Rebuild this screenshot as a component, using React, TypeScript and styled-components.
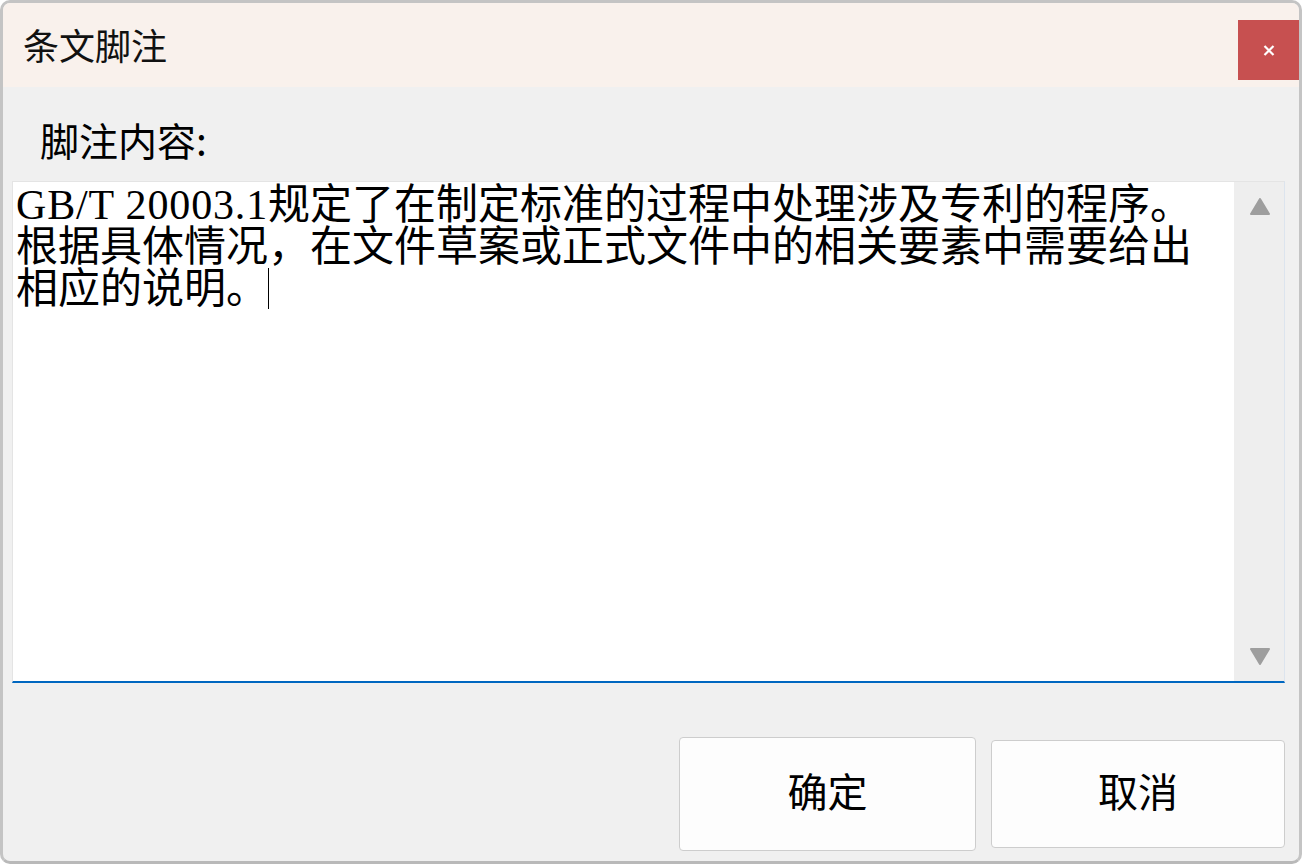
import React from "react";
import styled, { createGlobalStyle } from "styled-components";

const GlobalStyle = createGlobalStyle`
  html, body {
    margin: 0;
    padding: 0;
    background: #ffffff;
  }
  * { box-sizing: border-box; }
`;

const Window = styled.div`
  width: 1302px;
  height: 864px;
  border: 3px solid #c4c4c4;
  border-bottom-color: #b9b9b9;
  border-radius: 10px;
  background: #f0f0f0;
  overflow: hidden;
  display: flex;
  flex-direction: column;
`;

const TitleBar = styled.div`
  height: 84px;
  flex: none;
  background: #f9f1ec;
  display: flex;
  align-items: flex-start;
  justify-content: space-between;
`;

const Title = styled.div`
  font-family: "Noto Sans CJK SC", "Noto Sans", sans-serif;
  font-size: 36px;
  line-height: 40px;
  color: #111111;
  margin: 21px 0 0 20px;
`;

const CloseButton = styled.button`
  width: 61px;
  height: 60px;
  margin-top: 17px;
  border: none;
  padding: 0;
  background: #c75050;
  display: flex;
  align-items: center;
  justify-content: center;
  cursor: pointer;
`;

const Body = styled.div`
  flex: 1;
  display: flex;
  flex-direction: column;
  padding: 34px 14px 0 9px;
`;

const Label = styled.div`
  font-family: "Noto Sans CJK SC", serif;
  font-size: 39px;
  line-height: 36px;
  height: 40px;
  color: #000000;
  margin-left: 28px;
`;

const TextBox = styled.div`
  margin-top: 20px;
  height: 502px;
  display: flex;
  border: 1px solid #e4e4e4;
  border-right-color: #dce4ee;
  border-bottom: 2px solid #0067c0;
`;

const TextArea = styled.div`
  flex: 1;
  background: #ffffff;
  padding: 2px 0 0 3px;
  font-family: "Liberation Serif", "Noto Sans CJK SC", serif;
  font-size: 42px;
  color: #000000;
`;

const Line = styled.div`
  white-space: pre;
  line-height: 42px;
  height: 42px;
`;

const Latin = styled.span`
  letter-spacing: 0.02em;
`;

const Caret = styled.span`
  display: inline-block;
  width: 1px;
  height: 41px;
  background: #000000;
  vertical-align: top;
`;

const ScrollBar = styled.div`
  width: 50px;
  flex: none;
  background: #eeeeee;
  display: flex;
  flex-direction: column;
  align-items: center;
  justify-content: space-between;
  padding: 16px 0 16px 2px;
`;

const ButtonRow = styled.div`
  margin-top: 54px;
  display: flex;
  justify-content: flex-end;
  align-items: center;
  gap: 15px;
`;

const DialogButton = styled.button<{ $primary?: boolean }>`
  width: ${(p) => (p.$primary ? "297px" : "294px")};
  height: ${(p) => (p.$primary ? "114px" : "108px")};
  background: #fdfdfd;
  border: 1px solid #cdcdcd;
  border-radius: 4px;
  font-family: "Noto Sans CJK SC", serif;
  font-size: 40px;
  line-height: 1;
  color: #000000;
  padding: 0 0 8px;
  display: flex;
  align-items: center;
  justify-content: center;
`;

const Triangle: React.FC<{ down?: boolean }> = ({ down }) => (
  <svg width="22" height="17" viewBox="0 0 22 17">
    <path
      d={down ? "M2 1 L20 1 L11 16 Z" : "M11 1 L20 16 L2 16 Z"}
      fill="#9e9e9e"
      stroke="#9e9e9e"
      strokeWidth="2"
      strokeLinejoin="round"
    />
  </svg>
);

export default function App() {
  return (
    <>
      <GlobalStyle />
      <Window>
        <TitleBar>
          <Title>条文脚注</Title>
          <CloseButton aria-label="关闭">
            <svg width="12" height="11" viewBox="0 0 12 11">
              <path d="M1.5 1 L10.5 10 M10.5 1 L1.5 10" stroke="#ffffff" strokeWidth="2.2" />
            </svg>
          </CloseButton>
        </TitleBar>
        <Body>
          <Label>脚注内容:</Label>
          <TextBox>
            <TextArea>
              <Line>
                <Latin>GB/T 20003.1</Latin>规定了在制定标准的过程中处理涉及专利的程序。
              </Line>
              <Line>根据具体情况，在文件草案或正式文件中的相关要素中需要给出</Line>
              <Line>
                相应的说明。<Caret />
              </Line>
            </TextArea>
            <ScrollBar>
              <Triangle />
              <Triangle down />
            </ScrollBar>
          </TextBox>
          <ButtonRow>
            <DialogButton $primary>确定</DialogButton>
            <DialogButton>取消</DialogButton>
          </ButtonRow>
        </Body>
      </Window>
    </>
  );
}
